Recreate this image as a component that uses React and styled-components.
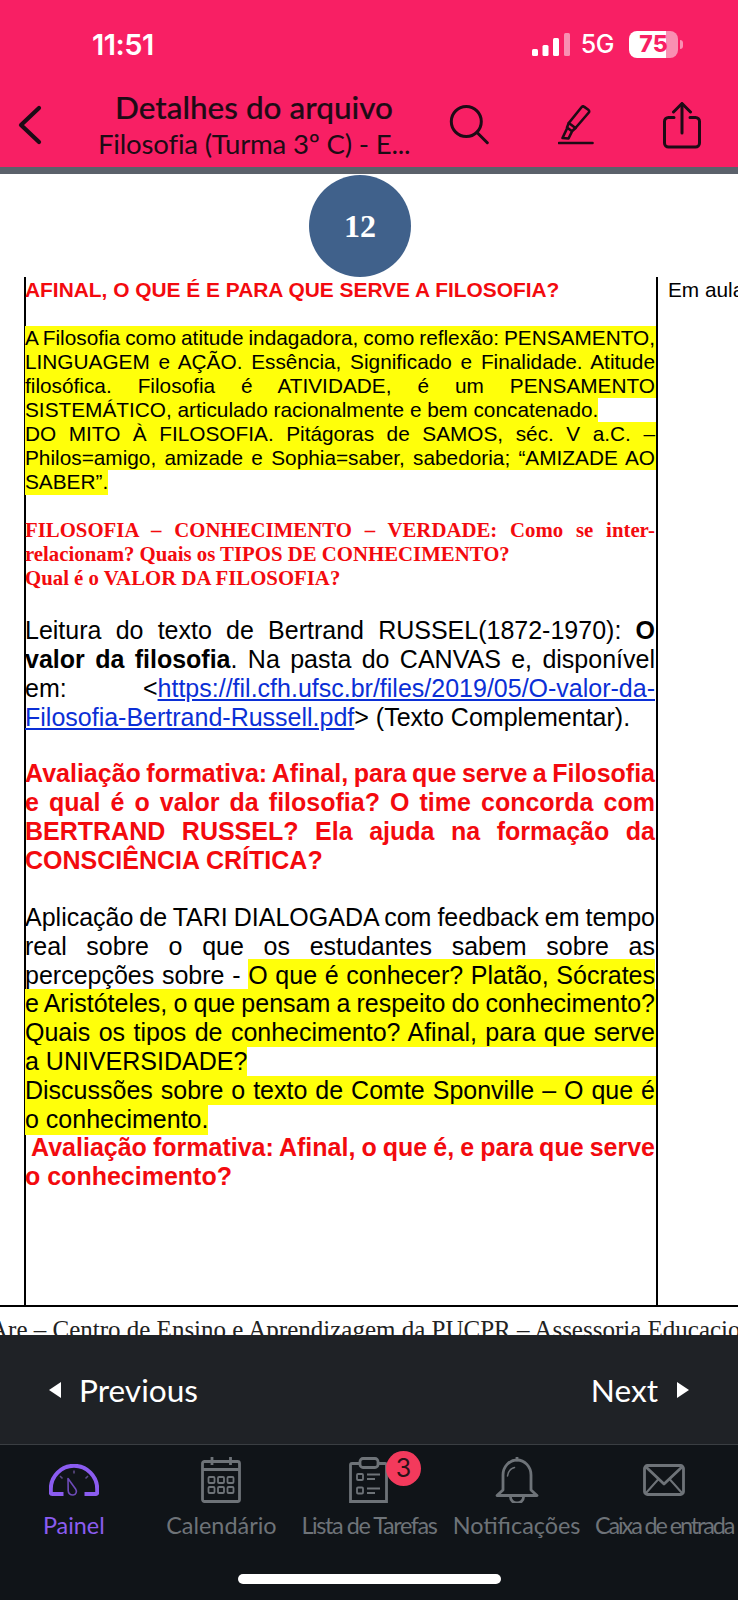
import React from 'react'
import styled, { createGlobalStyle } from 'styled-components'

const GlobalStyle = createGlobalStyle`
  html, body {
    margin: 0;
    padding: 0;
    background: #fff;
  }
`

const Page = styled.div`
  width: 738px;
  height: 1600px;
  display: flex;
  flex-direction: column;
  overflow: hidden;
  font-family: 'Lato', 'Liberation Sans', sans-serif;
`

const Top = styled.header`
  height: 167px;
  background: #f81f64;
  border-bottom: 7px solid #5b616b;
  flex-shrink: 0;
`

const StatusBar = styled.div`
  height: 88px;
  display: flex;
  align-items: center;
  padding-left: 92px;
`

const Clock = styled.span`
  font-family: 'Inter', sans-serif;
  font-size: 29px;
  font-weight: 600;
  color: #fff;
  letter-spacing: -0.5px;
`

const StatusRight = styled.div`
  margin-left: auto;
  margin-right: 60px;
  display: flex;
  align-items: center;
`

const Network = styled.span`
  font-family: 'Inter', sans-serif;
  font-size: 25px;
  font-weight: 500;
  color: #fff;
  margin: 0 15px 0 11px;
  letter-spacing: -0.5px;
`

const Battery = styled.div`
  position: relative;
  width: 49px;
  height: 27px;
  border-radius: 8px;
  background: linear-gradient(90deg, #fff 76%, #f98fb2 76%);
  color: #f81f64;
  font-family: 'Inter', sans-serif;
  font-size: 23px;
  font-weight: 800;
  line-height: 27px;
  text-align: center;

  &::after {
    content: '';
    position: absolute;
    right: -5px;
    top: 9px;
    width: 3px;
    height: 9px;
    border-radius: 0 3px 3px 0;
    background: #f98fb2;
  }
`

const NavRow = styled.div`
  display: flex;
  align-items: center;
  padding-left: 18px;
  color: #1d0b15;
`

const TitleBlock = styled.div`
  width: 312px;
  margin-left: 56px;
  text-align: center;
  white-space: nowrap;
`

const Title = styled.div`
  font-size: 31.5px;
  line-height: 38px;
  font-weight: 500;
  -webkit-text-stroke: 0.2px #1d0b15;
`

const Subtitle = styled.div`
  font-size: 27.6px;
  line-height: 36px;
  letter-spacing: -0.2px;
`

const Actions = styled.div`
  display: flex;
  align-items: center;
  gap: 69px;
  margin-left: 39px;
`

const Sheet = styled.main`
  flex: 0 0 1161px;
  display: flex;
  flex-direction: column;
  background: #fff;
  overflow: hidden;
`

const CircleRow = styled.div`
  height: 103px;
  display: flex;
  justify-content: center;
  flex-shrink: 0;
`

const PageNumber = styled.div`
  width: 102px;
  height: 102px;
  margin: 1px 18px 0 0;
  border-radius: 50%;
  background: #40618b;
  color: #fff;
  font-family: 'Liberation Serif', serif;
  font-weight: 700;
  font-size: 32px;
  display: flex;
  align-items: center;
  justify-content: center;
`

const Table = styled.div`
  height: 1030px;
  flex-shrink: 0;
  box-sizing: border-box;
  border-bottom: 2px solid #000;
  padding-left: 24px;
  display: flex;
  font-family: 'Liberation Sans', sans-serif;
  color: #000;
`

const MainCell = styled.div`
  width: 630px;
  border-left: 2px solid #000;
  border-right: 2px solid #000;
  flex-shrink: 0;
`

const Prose = styled.div`
  margin-left: -1px;
  width: 631px;
`

const SideCell = styled.div`
  padding: 1px 0 0 10px;
  font-size: 20.8px;
  line-height: 24px;
  white-space: nowrap;
`

const Section = styled.section`
  margin-top: ${(p) => p.$top}px;
  font-family: ${(p) => (p.$serif ? "'Liberation Serif', serif" : 'inherit')};
  font-size: ${(p) => p.$size}px;
  line-height: ${(p) => p.$height}px;
  font-weight: ${(p) => (p.$bold ? 700 : 400)};
  color: ${(p) => (p.$red ? '#f30a0e' : '#000')};
`

const Line = styled.div`
  padding-right: 1px;
  text-align: ${(p) => (p.$fit ? 'justify' : 'left')};
  text-align-last: ${(p) => (p.$fit ? 'justify' : 'left')};
  background: ${(p) => (p.$marked ? '#ffff0a' : 'transparent')};
  word-spacing: ${(p) => p.$squeeze || 0}px;
`

const Mark = styled.span`
  background: #ffff0a;
  padding: 2px 0;
`

const DocLink = styled.a`
  color: #0b2fd6;
  text-decoration: underline;
`

const Footer = styled.div`
  height: 28px;
  overflow: hidden;
  flex-shrink: 0;
  white-space: nowrap;
  font-family: 'Liberation Serif', serif;
  font-size: 25px;
  line-height: 26px;
  padding-top: 10px;
  box-sizing: border-box;
  color: #222;
  margin-left: -10px;
`

const PageNav = styled.nav`
  height: 110px;
  flex-shrink: 0;
  box-sizing: border-box;
  border-bottom: 1px solid #3a3e42;
  background: #1f2226;
  display: flex;
  align-items: center;
  justify-content: space-between;
  padding: 0 49px;
  color: #fff;
  font-size: 31.6px;
`

const NavButton = styled.div`
  display: flex;
  align-items: center;
  gap: ${(p) => p.$gap}px;
`

const Arrow = styled.span`
  width: 0;
  height: 0;
  border-top: 8px solid transparent;
  border-bottom: 8px solid transparent;
  border-${(p) => (p.$left ? 'right' : 'left')}: 12px solid #fff;
`

const TabBar = styled.footer`
  flex: 1;
  background: #101418;
  display: flex;
  flex-direction: column;
  align-items: center;
  padding-top: 12px;
`

const Tabs = styled.div`
  width: 738px;
  display: grid;
  grid-template-columns: repeat(5, 147.6px);
`

const Tab = styled.div`
  display: flex;
  flex-direction: column;
  align-items: center;
  color: ${(p) => (p.$active ? '#8b5cf0' : '#6e7378')};
`

const IconSlot = styled.div`
  position: relative;
  height: 46px;
  display: flex;
  align-items: center;
  justify-content: center;
`

const Badge = styled.span`
  position: absolute;
  left: 37px;
  top: -6px;
  width: 35px;
  height: 35px;
  border-radius: 50%;
  background: #f33a5c;
  color: #2a1218;
  font-family: 'Inter', sans-serif;
  font-size: 25px;
  line-height: 35px;
  text-align: center;
`

const TabLabel = styled.span`
  margin-top: 7px;
  font-size: 23.4px;
  line-height: 30px;
  white-space: nowrap;
  letter-spacing: ${(p) => p.$track || 0}px;
`

const HomeBar = styled.div`
  width: 263px;
  height: 10px;
  margin-top: 34px;
  border-radius: 5px;
  background: #fff;
`

const SignalIcon = () => (
  <svg width="38" height="23" viewBox="0 0 38 23" fill="#fff">
    <rect x="0" y="16" width="6" height="7" rx="1.5" />
    <rect x="10.5" y="12" width="6" height="11" rx="1.5" />
    <rect x="21" y="5" width="6" height="18" rx="1.5" />
    <rect x="32" y="0" width="6" height="23" rx="1.5" fill="#f98fb2" />
  </svg>
)

const BackIcon = () => (
  <svg width="24" height="40" viewBox="0 0 24 40" fill="none" stroke="currentColor" strokeWidth="4.2" strokeLinecap="round" strokeLinejoin="round">
    <path d="M21 3 3 20l18 17" />
  </svg>
)

const SearchIcon = () => (
  <svg width="40" height="40" viewBox="0 0 40 40" fill="none" stroke="currentColor" strokeWidth="3" strokeLinecap="round">
    <circle cx="17.3" cy="16.5" r="15" />
    <path d="M28.3 27.7 38.3 37.7" />
  </svg>
)

const HighlighterIcon = () => (
  <svg width="36" height="40" viewBox="0 0 36 40" fill="none" stroke="currentColor" strokeWidth="2.6" strokeLinecap="round" strokeLinejoin="round">
    <path d="M23.5 2.2a2 2 0 0 1 2.8-.3l4 2.800a2 2 0 0 1 .5 2.800L17.500 23l-6.700-5z" />
    <path d="M10.800 18 9 22.500l5 3.800 3.500-3.300" />
    <path d="M9 23.500 4.500 33l6 .5 3-6" />
    <path d="M1 38h33.5" />
  </svg>
)

const ShareIcon = () => (
  <svg width="38" height="47" viewBox="0 0 38 47" fill="none" stroke="currentColor" strokeWidth="3" strokeLinecap="round" strokeLinejoin="round">
    <path d="M11 15.5H5.5a4 4 0 0 0-4 4V41a4 4 0 0 0 4 4h27a4 4 0 0 0 4-4V19.5a4 4 0 0 0-4-4H27" />
    <path d="M19 2v29" />
    <path d="M10.5 10 19 1.5l8.5 8.5" />
  </svg>
)

const GaugeIcon = () => (
  <svg width="50" height="32" viewBox="0 0 50 32" fill="none" stroke="currentColor" strokeWidth="4">
    <path d="M14.5 30H3.2a1.4 1.4 0 0 1-1.4-1.4V25a23.2 23.2 0 0 1 46.4 0v3.600a1.4 1.4 0 0 1-1.4 1.4H35.5" />
    <path d="M25 6.500V9.500M11 12l2.500 2.500M39 12l-2.500 2.500" stroke="#5c4a86" strokeWidth="1.6" />
    <path d="M19 14.500l7.600 10.500c1.600 2.400.6 5.800-2.400 6-3 .2-5-1.800-5-4.600z" stroke="#6d4bb8" strokeWidth="1.6" strokeLinejoin="round" />
  </svg>
)

const CalendarIcon = () => (
  <svg width="40" height="46" viewBox="0 0 40 46" fill="none" stroke="currentColor" strokeWidth="2.8">
    <rect x="1.5" y="4.5" width="37" height="40" rx="2" />
    <path d="M1.5 12.5h37" />
    <path d="M11 0v8M29.500 0v8" />
    <g strokeWidth="1.8">
      <rect x="7.5" y="20" width="6" height="6" rx="1" />
      <rect x="17" y="20" width="6" height="6" rx="1" />
      <rect x="26.5" y="20" width="6" height="6" rx="1" />
      <rect x="7.500" y="30" width="6" height="6" rx="1" />
      <rect x="17" y="30" width="6" height="6" rx="1" />
      <rect x="26.5" y="30" width="6" height="6" rx="1" />
    </g>
  </svg>
)

const ClipboardIcon = () => (
  <svg width="40" height="46" viewBox="0 0 40 46" fill="none" stroke="currentColor" strokeWidth="2.8">
    <path d="M11 6.500H3a1.500 1.500 0 0 0-1.500 1.500v36.500h36V8A1.500 1.500 0 0 0 36 6.500h-7" />
    <rect x="11" y="1.500" width="18" height="9" rx="3" />
    <g strokeWidth="1.8">
      <rect x="8" y="17" width="6" height="6" rx="1" />
      <rect x="8" y="30.500" width="6" height="6" rx="1" />
      <path d="M18 17.500h13M18 22h8M18 31.500h13M18 36h8" />
    </g>
  </svg>
)

const BellIcon = () => (
  <svg width="44" height="46" viewBox="0 0 44 46" fill="none" stroke="currentColor" strokeWidth="2.8" strokeLinecap="round">
    <path d="M22 0v3" />
    <path d="M8 33V18a14 15 0 0 1 28 0v15l6 5.500H2z" strokeLinejoin="round" />
    <path d="M15.500 40a6.500 6 0 0 0 13 0" />
    <path d="M12.500 19c.5-4 3-7.500 7-8.500" strokeWidth="1.500" />
  </svg>
)

const EnvelopeIcon = () => (
  <svg width="42" height="32" viewBox="0 0 42 32" fill="none" stroke="currentColor" strokeWidth="2.8" strokeLinejoin="round">
    <rect x="1.500" y="1.500" width="39" height="29" rx="3" />
    <path d="M3 3 21 20 39 3" />
    <path d="M3 29 15.500 15M39 29 26.500 15" strokeWidth="2" />
  </svg>
)

const tabs = [
  { label: 'Painel', icon: <GaugeIcon />, active: true },
  { label: 'Calendário', icon: <CalendarIcon /> },
  { label: 'Lista de Tarefas', icon: <ClipboardIcon />, badge: 3, track: -1.4 },
  { label: 'Notificações', icon: <BellIcon /> },
  { label: 'Caixa de entrada', icon: <EnvelopeIcon />, track: -2.1 },
]

const App = () => {
  return (
    <Page>
      <GlobalStyle />
      <Top>
        <StatusBar>
          <Clock>11:51</Clock>
          <StatusRight>
            <SignalIcon />
            <Network>5G</Network>
            <Battery>75</Battery>
          </StatusRight>
        </StatusBar>
        <NavRow>
          <BackIcon />
          <TitleBlock>
            <Title>Detalhes do arquivo</Title>
            <Subtitle>Filosofia (Turma 3º C) - E...</Subtitle>
          </TitleBlock>
          <Actions>
            <SearchIcon />
            <HighlighterIcon />
            <ShareIcon />
          </Actions>
        </NavRow>
      </Top>

      <Sheet>
        <CircleRow>
          <PageNumber>12</PageNumber>
        </CircleRow>
        <Table>
          <MainCell>
            <Prose>
              <Section $top={1} $size={20.9} $height={24} $bold $red>
                <Line>AFINAL, O QUE É E PARA QUE SERVE A FILOSOFIA?</Line>
              </Section>

              <Section $top={24} $size={20.8} $height={24}>
                <Line $fit $marked $squeeze={-3}>A Filosofia como atitude indagadora, como reflexão: PENSAMENTO,</Line>
                <Line $fit $marked $squeeze={-2}>LINGUAGEM e AÇÃO. Essência, Significado e Finalidade. Atitude</Line>
                <Line $fit $marked>filosófica. Filosofia é ATIVIDADE, é um PENSAMENTO</Line>
                <Line><Mark>SISTEMÁTICO, articulado racionalmente e bem concatenado.</Mark></Line>
                <Line $fit $marked>DO MITO À FILOSOFIA. Pitágoras de SAMOS, séc. V a.C. –</Line>
                <Line $fit $marked $squeeze={-2}>Philos=amigo, amizade e Sophia=saber, sabedoria; “AMIZADE AO</Line>
                <Line><Mark>SABER”.</Mark></Line>
              </Section>

              <Section $top={24} $size={20.8} $height={24} $serif $bold $red>
                <Line $fit>FILOSOFIA – CONHECIMENTO – VERDADE: Como se inter-</Line>
                <Line>relacionam? Quais os TIPOS DE CONHECIMENTO?</Line>
                <Line>Qual é o VALOR DA FILOSOFIA?</Line>
              </Section>

              <Section $top={26} $size={25} $height={29}>
                <Line $fit>Leitura do texto de Bertrand RUSSEL(1872-1970): <b>O</b></Line>
                <Line $fit><b>valor da filosofia</b>. Na pasta do CANVAS e, disponível</Line>
                <Line $fit>em: <span>&lt;<DocLink>https://fil.cfh.ufsc.br/files/2019/05/O-valor-da-</DocLink></span></Line>
                <Line><DocLink>Filosofia-Bertrand-Russell.pdf</DocLink>&gt; (Texto Complementar).</Line>
              </Section>

              <Section $top={27} $size={25} $height={29} $bold $red>
                <Line $fit $squeeze={-3}>Avaliação formativa: Afinal, para que serve a Filosofia</Line>
                <Line $fit>e qual é o valor da filosofia? O time concorda com</Line>
                <Line $fit>BERTRAND RUSSEL? Ela ajuda na formação da</Line>
                <Line>CONSCIÊNCIA CRÍTICA?</Line>
              </Section>

              <Section $top={28} $size={25} $height={28.8}>
                <Line $fit $squeeze={-3}>Aplicação de TARI DIALOGADA com feedback em tempo</Line>
                <Line $fit>real sobre o que os estudantes sabem sobre as</Line>
                <Line $fit>percepções sobre - <Mark>O que é conhecer? Platão, Sócrates</Mark></Line>
                <Line $fit $marked $squeeze={-3}>e Aristóteles, o que pensam a respeito do conhecimento?</Line>
                <Line $fit $marked $squeeze={-2}>Quais os tipos de conhecimento? Afinal, para que serve</Line>
                <Line><Mark>a UNIVERSIDADE?</Mark></Line>
                <Line $fit $marked $squeeze={-2}>Discussões sobre o texto de Comte Sponville – O que é</Line>
                <Line><Mark>o conhecimento.</Mark></Line>
                <Section $top={0} $size={25} $height={28.8} $bold $red>
                  <Line $fit $squeeze={-3}>&nbsp;Avaliação formativa: Afinal, o que é, e para que serve</Line>
                  <Line>o conhecimento?</Line>
                </Section>
              </Section>
            </Prose>
          </MainCell>
          <SideCell>Em aula</SideCell>
        </Table>
        <Footer>Are – Centro de Ensino e Aprendizagem da PUCPR – Assessoria Educacional</Footer>
      </Sheet>

      <PageNav>
        <NavButton $gap={18}>
          <Arrow $left />
          Previous
        </NavButton>
        <NavButton $gap={19}>
          Next
          <Arrow />
        </NavButton>
      </PageNav>

      <TabBar>
        <Tabs>
          {tabs.map((tab) => (
            <Tab key={tab.label} $active={tab.active}>
              <IconSlot>
                {tab.icon}
                {tab.badge && <Badge>{tab.badge}</Badge>}
              </IconSlot>
              <TabLabel $track={tab.track}>{tab.label}</TabLabel>
            </Tab>
          ))}
        </Tabs>
        <HomeBar />
      </TabBar>
    </Page>
  )
}

export default App
